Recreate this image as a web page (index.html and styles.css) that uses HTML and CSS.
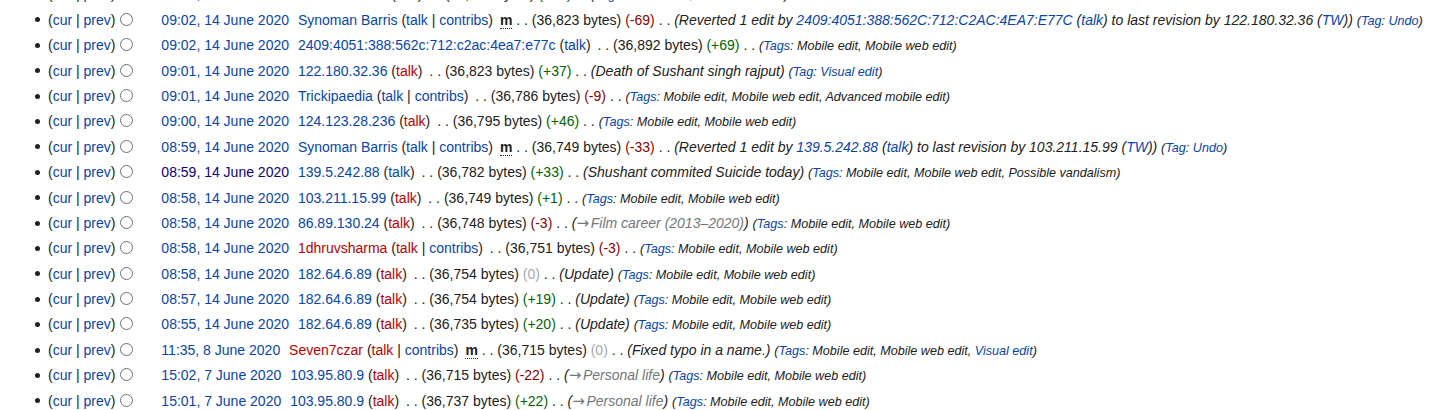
FILE: index.html
```html
<!DOCTYPE html>
<html lang="en">
<head>
<meta charset="utf-8">
<title>Revision history</title>
<link rel="stylesheet" href="styles.css">
</head>
<body>
<ul class="history">
  <li>
    <span class="nav">(<a href="#">cur</a> | <a href="#">prev</a>)</span> <input type="radio" class="radio" name="r0"><a href="#" class="date">09:03, 14 June 2020</a> <span class="user"><a href="#">122.180.32.36</a> <span class="tools">(<a href="#" class="new">talk</a>)</span></span> <span class="sep">. .</span> <span class="size">(36,892 bytes)</span> <span class="pos">(+69)</span> <span class="sep">. .</span> <span class="tags">(<a href="#">Tags</a>: Mobile edit, Mobile web edit)</span>
  </li>
  <li>
    <span class="nav">(<a href="#">cur</a> | <a href="#">prev</a>)</span> <input type="radio" class="radio" name="r1"><a href="#" class="date">09:02, 14 June 2020</a> <span class="user"><a href="#">Synoman Barris</a> <span class="tools">(<a href="#">talk</a> | <a href="#">contribs</a>)</span></span> <abbr class="minor" title="This is a minor edit">m</abbr> <span class="sep">. .</span> <span class="size">(36,823 bytes)</span> <span class="neg">(-69)</span> <span class="sep">. .</span> <span class="comment">(Reverted 1 edit by <a href="#">2409:4051:388:562C:712:C2AC:4EA7:E77C</a> (<a href="#">talk</a>) to last revision by 122.180.32.36 (<a href="#">TW</a>))</span> <span class="tags">(<a href="#">Tag</a>: <a href="#">Undo</a>)</span>
  </li>
  <li>
    <span class="nav">(<a href="#">cur</a> | <a href="#">prev</a>)</span> <input type="radio" class="radio" name="r2"><a href="#" class="date">09:02, 14 June 2020</a> <span class="user"><a href="#">2409:4051:388:562c:712:c2ac:4ea7:e77c</a> <span class="tools">(<a href="#">talk</a>)</span></span> <span class="sep">. .</span> <span class="size">(36,892 bytes)</span> <span class="pos">(+69)</span> <span class="sep">. .</span> <span class="tags">(<a href="#">Tags</a>: Mobile edit, Mobile web edit)</span>
  </li>
  <li>
    <span class="nav">(<a href="#">cur</a> | <a href="#">prev</a>)</span> <input type="radio" class="radio" name="r3"><a href="#" class="date">09:01, 14 June 2020</a> <span class="user"><a href="#">122.180.32.36</a> <span class="tools">(<a href="#" class="new">talk</a>)</span></span> <span class="sep">. .</span> <span class="size">(36,823 bytes)</span> <span class="pos">(+37)</span> <span class="sep">. .</span> <span class="comment">(Death of Sushant singh rajput)</span> <span class="tags">(<a href="#">Tag</a>: <a href="#">Visual edit</a>)</span>
  </li>
  <li>
    <span class="nav">(<a href="#">cur</a> | <a href="#">prev</a>)</span> <input type="radio" class="radio" name="r4"><a href="#" class="date">09:01, 14 June 2020</a> <span class="user"><a href="#">Trickipaedia</a> <span class="tools">(<a href="#">talk</a> | <a href="#">contribs</a>)</span></span> <span class="sep">. .</span> <span class="size">(36,786 bytes)</span> <span class="neg">(-9)</span> <span class="sep">. .</span> <span class="tags">(<a href="#">Tags</a>: Mobile edit, Mobile web edit, Advanced mobile edit)</span>
  </li>
  <li>
    <span class="nav">(<a href="#">cur</a> | <a href="#">prev</a>)</span> <input type="radio" class="radio" name="r5"><a href="#" class="date">09:00, 14 June 2020</a> <span class="user"><a href="#">124.123.28.236</a> <span class="tools">(<a href="#" class="new">talk</a>)</span></span> <span class="sep">. .</span> <span class="size">(36,795 bytes)</span> <span class="pos">(+46)</span> <span class="sep">. .</span> <span class="tags">(<a href="#">Tags</a>: Mobile edit, Mobile web edit)</span>
  </li>
  <li>
    <span class="nav">(<a href="#">cur</a> | <a href="#">prev</a>)</span> <input type="radio" class="radio" name="r6"><a href="#" class="date">08:59, 14 June 2020</a> <span class="user"><a href="#">Synoman Barris</a> <span class="tools">(<a href="#">talk</a> | <a href="#">contribs</a>)</span></span> <abbr class="minor" title="This is a minor edit">m</abbr> <span class="sep">. .</span> <span class="size">(36,749 bytes)</span> <span class="neg">(-33)</span> <span class="sep">. .</span> <span class="comment">(Reverted 1 edit by <a href="#">139.5.242.88</a> (<a href="#">talk</a>) to last revision by 103.211.15.99 (<a href="#">TW</a>))</span> <span class="tags">(<a href="#">Tag</a>: <a href="#">Undo</a>)</span>
  </li>
  <li>
    <span class="nav">(<a href="#">cur</a> | <a href="#">prev</a>)</span> <input type="radio" class="radio" name="r7"><a href="#" class="date visited">08:59, 14 June 2020</a> <span class="user"><a href="#">139.5.242.88</a> <span class="tools">(<a href="#">talk</a>)</span></span> <span class="sep">. .</span> <span class="size">(36,782 bytes)</span> <span class="pos">(+33)</span> <span class="sep">. .</span> <span class="comment">(Shushant commited Suicide today)</span> <span class="tags">(<a href="#">Tags</a>: Mobile edit, Mobile web edit, Possible vandalism)</span>
  </li>
  <li>
    <span class="nav">(<a href="#">cur</a> | <a href="#">prev</a>)</span> <input type="radio" class="radio" name="r8"><a href="#" class="date">08:58, 14 June 2020</a> <span class="user"><a href="#">103.211.15.99</a> <span class="tools">(<a href="#" class="new">talk</a>)</span></span> <span class="sep">. .</span> <span class="size">(36,749 bytes)</span> <span class="pos">(+1)</span> <span class="sep">. .</span> <span class="tags">(<a href="#">Tags</a>: Mobile edit, Mobile web edit)</span>
  </li>
  <li>
    <span class="nav">(<a href="#">cur</a> | <a href="#">prev</a>)</span> <input type="radio" class="radio" name="r9"><a href="#" class="date">08:58, 14 June 2020</a> <span class="user"><a href="#">86.89.130.24</a> <span class="tools">(<a href="#" class="new">talk</a>)</span></span> <span class="sep">. .</span> <span class="size">(36,748 bytes)</span> <span class="neg">(-3)</span> <span class="sep">. .</span> <span class="comment">(<span class="autocomment"><a href="#" class="arrow">→</a>Film career (2013–2020)</span>)</span> <span class="tags">(<a href="#">Tags</a>: Mobile edit, Mobile web edit)</span>
  </li>
  <li>
    <span class="nav">(<a href="#">cur</a> | <a href="#">prev</a>)</span> <input type="radio" class="radio" name="r10"><a href="#" class="date">08:58, 14 June 2020</a> <span class="user"><a href="#" class="new">1dhruvsharma</a> <span class="tools">(<a href="#" class="new">talk</a> | <a href="#">contribs</a>)</span></span> <span class="sep">. .</span> <span class="size">(36,751 bytes)</span> <span class="neg">(-3)</span> <span class="sep">. .</span> <span class="tags">(<a href="#">Tags</a>: Mobile edit, Mobile web edit)</span>
  </li>
  <li>
    <span class="nav">(<a href="#">cur</a> | <a href="#">prev</a>)</span> <input type="radio" class="radio" name="r11"><a href="#" class="date">08:58, 14 June 2020</a> <span class="user"><a href="#">182.64.6.89</a> <span class="tools">(<a href="#" class="new">talk</a>)</span></span> <span class="sep">. .</span> <span class="size">(36,754 bytes)</span> <span class="null">(0)</span> <span class="sep">. .</span> <span class="comment">(Update)</span> <span class="tags">(<a href="#">Tags</a>: Mobile edit, Mobile web edit)</span>
  </li>
  <li>
    <span class="nav">(<a href="#">cur</a> | <a href="#">prev</a>)</span> <input type="radio" class="radio" name="r12"><a href="#" class="date">08:57, 14 June 2020</a> <span class="user"><a href="#">182.64.6.89</a> <span class="tools">(<a href="#" class="new">talk</a>)</span></span> <span class="sep">. .</span> <span class="size">(36,754 bytes)</span> <span class="pos">(+19)</span> <span class="sep">. .</span> <span class="comment">(Update)</span> <span class="tags">(<a href="#">Tags</a>: Mobile edit, Mobile web edit)</span>
  </li>
  <li>
    <span class="nav">(<a href="#">cur</a> | <a href="#">prev</a>)</span> <input type="radio" class="radio" name="r13"><a href="#" class="date">08:55, 14 June 2020</a> <span class="user"><a href="#">182.64.6.89</a> <span class="tools">(<a href="#" class="new">talk</a>)</span></span> <span class="sep">. .</span> <span class="size">(36,735 bytes)</span> <span class="pos">(+20)</span> <span class="sep">. .</span> <span class="comment">(Update)</span> <span class="tags">(<a href="#">Tags</a>: Mobile edit, Mobile web edit)</span>
  </li>
  <li>
    <span class="nav">(<a href="#">cur</a> | <a href="#">prev</a>)</span> <input type="radio" class="radio" name="r14"><a href="#" class="date">11:35, 8 June 2020</a> <span class="user"><a href="#" class="new">Seven7czar</a> <span class="tools">(<a href="#" class="new">talk</a> | <a href="#">contribs</a>)</span></span> <abbr class="minor" title="This is a minor edit">m</abbr> <span class="sep">. .</span> <span class="size">(36,715 bytes)</span> <span class="null">(0)</span> <span class="sep">. .</span> <span class="comment">(Fixed typo in a name.)</span> <span class="tags">(<a href="#">Tags</a>: Mobile edit, Mobile web edit, <a href="#">Visual edit</a>)</span>
  </li>
  <li>
    <span class="nav">(<a href="#">cur</a> | <a href="#">prev</a>)</span> <input type="radio" class="radio" name="r15"><a href="#" class="date">15:02, 7 June 2020</a> <span class="user"><a href="#">103.95.80.9</a> <span class="tools">(<a href="#" class="new">talk</a>)</span></span> <span class="sep">. .</span> <span class="size">(36,715 bytes)</span> <span class="neg">(-22)</span> <span class="sep">. .</span> <span class="comment">(<span class="autocomment"><a href="#" class="arrow">→</a>Personal life</span>)</span> <span class="tags">(<a href="#">Tags</a>: Mobile edit, Mobile web edit)</span>
  </li>
  <li>
    <span class="nav">(<a href="#">cur</a> | <a href="#">prev</a>)</span> <input type="radio" class="radio" name="r16"><a href="#" class="date">15:01, 7 June 2020</a> <span class="user"><a href="#">103.95.80.9</a> <span class="tools">(<a href="#" class="new">talk</a>)</span></span> <span class="sep">. .</span> <span class="size">(36,737 bytes)</span> <span class="pos">(+22)</span> <span class="sep">. .</span> <span class="comment">(<span class="autocomment"><a href="#" class="arrow">→</a>Personal life</span>)</span> <span class="tags">(<a href="#">Tags</a>: Mobile edit, Mobile web edit)</span>
  </li>
</ul>
</body>
</html>
```

FILE: styles.css
```css
html, body {
  margin: 0;
  padding: 0;
  background: #ffffff;
}

body {
  font-family: "Liberation Sans", Arial, sans-serif;
  font-size: 14px;
  color: #202122;
  overflow: hidden;
}

a {
  color: #0645ad;
  text-decoration: none;
}

a.new {
  color: #ba0000;
}

a.visited {
  color: #0b0080;
}

.history {
  list-style: none;
  margin: -17.6px 0 0 0;
  padding: 0 0 0 48px;
}

.history li {
  position: relative;
  height: 22.4px;
  line-height: 22.4px;
  padding: 1px 0;
  margin-bottom: 1px;
  white-space: nowrap;
}

.history li::before {
  content: "";
  position: absolute;
  left: -13px;
  top: 50%;
  width: 5px;
  height: 5px;
  margin-top: -2.5px;
  border-radius: 50%;
  background: #202122;
}

.radio {
  -webkit-appearance: none;
  appearance: none;
  box-sizing: border-box;
  width: 13px;
  height: 13px;
  margin: 0 28px 0 1px;
  padding: 0;
  border: 1px solid #6f6f6f;
  border-radius: 50%;
  background: #ffffff;
  vertical-align: -1px;
}

.user {
  margin-left: 5px;
}

.tools {
  margin-right: 3px;
}

.minor {
  font-weight: bold;
  text-decoration: none;
  border-bottom: 1px dotted #202122;
  cursor: help;
}

.pos {
  color: #006400;
}

.neg {
  color: #8b0000;
}

.null {
  color: #a2a9b1;
}

.comment {
  font-style: italic;
}

.autocomment {
  color: #72777d;
}

.autocomment .arrow {
  display: inline-block;
  width: 14.3px;
  color: #72777d;
  font-family: "DejaVu Sans", sans-serif;
  font-style: normal;
  font-size: 15px;
  line-height: 1;
  text-align: left;
}

.tags {
  font-style: italic;
  font-size: 90%;
  line-height: 1;
}
```
